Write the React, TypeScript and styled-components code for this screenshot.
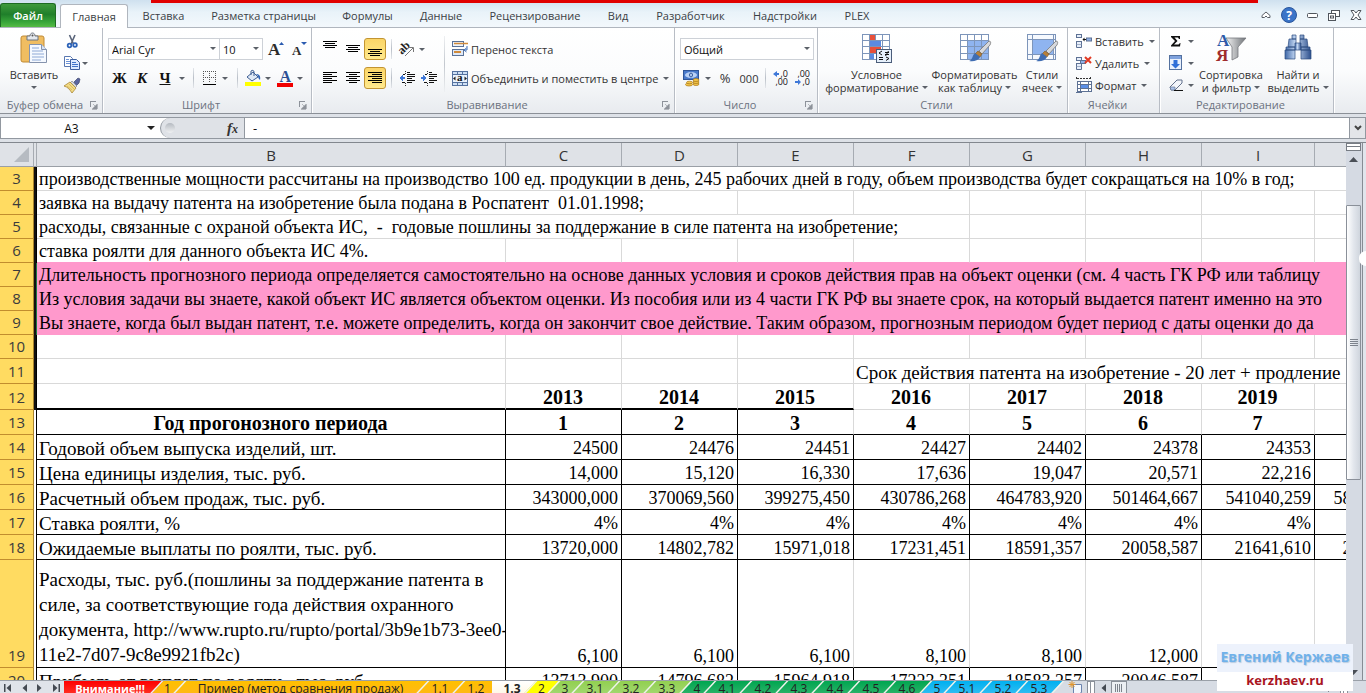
import React from "react";
import styled, { createGlobalStyle, css } from "styled-components";

const ui = '"Open Sans", "Noto Sans", "Liberation Sans", sans-serif';
const serif = '"Liberation Serif", "Times New Roman", serif';

const GlobalStyle = createGlobalStyle`
  * { box-sizing: border-box; }
  html, body, #root { height: 100%; }
  body { margin: 0; overflow: hidden; font-family: ${ui}; font-size: 11px; color: #333; background: #fff; }
  button, input, select { font: inherit; color: inherit; margin: 0; }
  button { border: 0; padding: 0; background: none; white-space: nowrap; }
  svg { display: block; flex: none; overflow: visible; }
`;

/* ---------- shell ---------- */
const Shell = styled.div`
  position: relative;
  display: flex;
  flex-direction: column;
  height: 100vh;
  overflow: hidden;
`;
const RedStrip = styled.div`
  position: absolute;
  top: 0;
  left: 151px;
  right: 108px;
  height: 3px;
  background: #e00000;
`;
const TabBar = styled.nav`
  display: flex;
  align-items: flex-end;
  height: 28px;
  flex: none;
  border-bottom: 1px solid #b0b6be;
  background: linear-gradient(#cfe1ef, #e9f3f9 45%, #f3f8fc);
`;
const FileTab = styled.button`
  width: 56px;
  height: 24px;
  border: 1px solid #1d6b22;
  border-bottom: 0;
  border-radius: 3px 3px 0 0;
  background: linear-gradient(#3f9a3c, #1f7f2a 45%, #3aa83a 80%, #56bb45);
  color: #fff;
  font-weight: 600;
`;
const RibbonTab = styled.button<{ $w: number; $active?: boolean }>`
  width: ${(p) => p.$w}px;
  height: 24px;
  color: #3b3f45;
  ${(p) =>
    p.$active &&
    css`
      margin: 0 1px -1px 4px;
      border: 1px solid #b0b6be;
      border-bottom: 0;
      border-radius: 3px 3px 0 0;
      background: #fff;
    `}
`;
const WindowTools = styled.div`
  display: flex;
  align-items: center;
  gap: 10px;
  height: 24px;
  margin-left: auto;
  padding-right: 4px;
`;

/* ---------- ribbon ---------- */
const Ribbon = styled.div`
  display: flex;
  flex: none;
  height: 86px;
  border-bottom: 1px solid #8b9097;
  background: linear-gradient(#fff, #fbfcfd 50%, #e8ebef);
`;
const GroupBox = styled.section<{ $w: number }>`
  display: flex;
  flex-direction: column;
  width: ${(p) => p.$w}px;
  border-right: 1px solid #b8bdc5;
  box-shadow: 1px 0 0 #fff;
`;
const GroupBody = styled.div<{ $pad?: number }>`
  display: flex;
  height: 69px;
  padding-left: ${(p) => p.$pad ?? 0}px;
`;
const GroupLabel = styled.div<{ $launcher?: boolean }>`
  display: grid;
  grid-template-columns: 1fr 12px;
  align-items: center;
  height: 15px;
  padding-right: ${(p) => (p.$launcher ? 0 : 0)}px;
  text-align: center;
  white-space: nowrap;
  color: #6b7280;
`;
const BigButton = styled.button<{ $w: number }>`
  display: flex;
  flex-direction: column;
  align-items: center;
  width: ${(p) => p.$w}px;
  padding-top: 5px;
  line-height: 13px;
`;
const BigText = styled.span`
  display: flex;
  align-items: center;
  gap: 3px;
  height: 13px;
`;
const BigIcon = styled.span`
  display: block;
  height: 35px;
`;
const SmallStack = styled.div`
  display: flex;
  flex-direction: column;
  padding-top: 2px;
`;
const TwoRows = styled.div`
  display: flex;
  flex-direction: column;
  gap: 7px;
  padding-top: 10px;
`;
const Row = styled.div`
  display: flex;
  align-items: center;
  height: 22px;
`;
const Tool = styled.button<{ $w: number; $on?: boolean; $size?: number }>`
  display: flex;
  align-items: center;
  justify-content: center;
  width: ${(p) => p.$w}px;
  height: 22px;
  font-size: ${(p) => p.$size ?? 11}px;
  ${(p) =>
    p.$on &&
    css`
      border: 1px solid #c29432;
      border-radius: 3px;
      background: linear-gradient(#fbd568, #fde17c 60%, #ffe98f);
    `}
`;
const LabelTool = styled.button`
  display: flex;
  align-items: center;
  gap: 3px;
  height: 22px;
  svg:last-child { margin-left: 2px; }
  svg:first-child { margin-left: 0; }
`;
const Glyph = styled.span<{ $kind: "b" | "i" | "u" }>`
  font-family: ${serif};
  font-size: 15px;
  font-weight: bold;
  line-height: 16px;
  color: #111;
  ${(p) => p.$kind === "i" && "font-style: italic;"}
  ${(p) => p.$kind === "u" && "text-decoration: underline;"}
`;
const Sep = styled.span<{ $w: number }>`
  width: ${(p) => p.$w}px;
  height: 20px;
  background: linear-gradient(#e3e6ea, #b9bfc7, #e3e6ea) center / 1px 100% no-repeat;
`;
const TallSep = styled.span`
  width: 1px;
  height: 56px;
  margin: 8px 7px 0 4px;
  background: linear-gradient(#eef0f2, #c3c8cf, #eef0f2);
`;
const Combo = styled.label<{ $w: number }>`
  position: relative;
  display: flex;
  width: ${(p) => p.$w}px;
  height: 22px;
  margin-right: -1px;
  select {
    appearance: none;
    width: 100%;
    height: 22px;
    padding: 0 3px;
    border: 1px solid #cdd1d7;
    border-radius: 0;
    background: #fff;
    color: #111;
  }
  svg {
    position: absolute;
    right: 4px;
    top: 9px;
  }
`;

/* ---------- formula bar ---------- */
const FormulaBar = styled.div`
  display: flex;
  flex: none;
  height: 29px;
  padding: 3px 0 0;
  border-bottom: 1px solid #82878e;
  background: #dde1e7;
`;
const FormulaInner = styled.div`
  display: flex;
  flex: 1;
  height: 22px;
  border: 1px solid #9298a0;
  background: #fff;
`;
const NameBox = styled.input`
  width: 141px;
  padding: 0;
  border: 0;
  background: #fff;
  text-align: center;
  font-size: 12px;
  color: #111;
`;
const FxZone = styled.div`
  display: flex;
  align-items: center;
  justify-content: space-between;
  width: 85px;
  padding: 0 6px 0 4px;
  border-left: 1px solid #9298a0;
  border-right: 1px solid #9298a0;
  border-radius: 11px 0 0 11px;
  background: #dfe2e7;
`;
const Knob = styled.span`
  width: 10px;
  height: 10px;
  border-radius: 5px;
  background: linear-gradient(#b5bac1, #f0f1f3);
`;
const Fx = styled.button`
  font: italic bold 15px/16px ${serif};
  color: #333;
  small { font-size: 12px; }
`;
const NameArrow = styled.button`
  display: grid;
  place-items: center;
  width: 18px;
`;
const FormulaInput = styled.input`
  flex: 1;
  min-width: 0;
  padding: 0 8px;
  border: 0;
  font-size: 13px;
  color: #111;
`;
const ExpandButton = styled.button`
  display: grid;
  place-items: center;
  width: 16px;
  border-left: 1px solid #9298a0;
  background: #e3e5e9;
`;

/* ---------- grid ---------- */
const SheetArea = styled.div`
  display: flex;
  flex: 1;
  min-height: 0;
`;
const Viewport = styled.main`
  flex: 1;
  min-width: 0;
  overflow: hidden;
`;
const Grid = styled.table`
  width: 1423px;
  table-layout: fixed;
  border-collapse: separate;
  border-spacing: 0;
  font-family: ${serif};
  font-size: 18px;
  color: #000;
  td, th { padding: 0; white-space: nowrap; }
`;
const ColHead = styled.th`
  height: 24px;
  border-right: 1px solid #a6abb2;
  border-bottom: 1px solid #9a9fa6;
  background: #dfe2e7;
  font: 15px/22px ${ui};
  color: #333;
`;
const Corner = styled(ColHead)`
  svg { margin-left: 14px; }
`;
const RowHead = styled.th<{ $h: number }>`
  height: ${(p) => p.$h}px;
  border-right: 1px solid #a9832c;
  border-bottom: 1px solid #c18d2e;
  background: #ffdb61;
  font: 15px/23px ${ui};
  color: #3c3c3c;
  vertical-align: bottom;
`;
const Edge = styled.td<{ $kind: "bar" | "green" | "line" }>`
  border-right: 1px solid ${(p) => (p.$kind === "green" ? "#1f7a45" : "#000")};
  background: ${(p) => (p.$kind === "line" ? "#fff" : "#111")};
`;
const Cell = styled.td<{
  $align?: "left" | "center" | "right";
  $bold?: boolean;
  $pink?: boolean;
  $right?: string;
  $bottom?: string;
  $lh?: number;
  $size?: number;
}>`
  overflow: hidden;
  vertical-align: bottom;
  font-size: ${(p) => (p.$bold ? 20 : p.$size ?? 18)}px;
  line-height: ${(p) => p.$lh ?? 21}px;
  text-align: ${(p) => p.$align ?? "left"};
  font-weight: ${(p) => (p.$bold ? "bold" : "normal")};
  background: ${(p) => (p.$pink ? "#ff99cc" : "#fff")};
  border-right: 1px solid ${(p) => p.$right ?? "#d9d9d9"};
  border-bottom: ${(p) => p.$bottom ?? "1px solid #d9d9d9"};
  && { padding: 0 3px 0 2px; white-space: pre; }
`;
const VScroll = styled.div`
  display: flex;
  flex-direction: column;
  width: 17px;
  border-right: 1px solid #878c94;
  background: #d5dae3;
`;
const SplitBox = styled.span`
  height: 8px;
  margin: 0 1px 0 0;
  border: 1px solid #777c84;
  background: linear-gradient(#fff 2px, #777c84 2px, #777c84 3px, #fff 3px);
`;
const ScrollArrow = styled.button`
  display: grid;
  place-items: center;
  width: 15px;
  height: 16px;
`;
const VThumb = styled.div`
  display: grid;
  place-items: center;
  width: 15px;
  height: 275px;
  margin-top: 38px;
  margin-bottom: auto;
  border: 1px solid #8a9099;
  border-radius: 1px;
  background: linear-gradient(90deg, #fff, #e3e7ed 50%, #cfd5dd);
`;
const RightStrip = styled.div`
  width: 3px;
  background: #e1e5ec;
`;
const Handle = styled.span`
  position: absolute;
  right: 0;
  top: 251px;
  width: 7px;
  height: 15px;
  border-radius: 8px 0 0 8px;
  background: #fff;
`;

/* ---------- sheet tabs ---------- */
const SheetBar = styled.div`
  display: flex;
  flex: none;
  height: 13px;
  overflow: hidden;
  border-top: 1px solid #9aa0a8;
  background: #d7dce4;
`;
const SheetNav = styled.div`
  display: flex;
  align-items: center;
  justify-content: space-around;
  width: 64px;
  height: 13px;
  background: #dfe3e9;
`;
const SheetTab = styled.button<{ $w: number; $c: string; $flat?: boolean; $dark?: boolean }>`
  position: relative;
  z-index: 0;
  width: ${(p) => p.$w}px;
  height: 16px;
  color: ${(p) => (p.$dark ? "#fff" : "#222")};
  font-size: ${(p) => (p.$dark ? 11 : 12)}px;
  line-height: 16px;
  font-weight: ${(p) => (p.$dark || p.$flat ? "bold" : "normal")};
  &::before {
    content: "";
    position: absolute;
    z-index: -1;
    inset: 0 -10px 0 -2px;
    transform: ${(p) => (p.$flat ? "none" : "skewX(-43deg)")};
    border-left: 2px solid #eef3ec;
    background: ${(p) => p.$c};
    ${(p) => p.$flat && "border: 0;"}
  }
  &:first-of-type::before { left: -12px; }
  &:last-of-type::before { right: 0; border-right: 2px solid #eef3ec; }
`;
const SheetTabs = styled.div`
  display: flex;
  overflow: hidden;
  padding-right: 8px;
`;
const HScroll = styled.div`
  display: flex;
  flex: 1;
  align-items: center;
  height: 13px;
  padding-right: 18px;
`;
const SplitHandle = styled.span`
  width: 8px;
  height: 13px;
  border: 1px solid #8a9099;
  background: linear-gradient(90deg, #fff 2px, #8a9099 2px, #8a9099 3px, #fff 3px);
`;
const HThumb = styled.span`
  display: grid;
  place-items: center;
  width: 16px;
  height: 13px;
  margin-right: auto;
  border: 1px solid #8a9099;
  background: #eceff3;
`;
const Watermark = styled.aside`
  position: absolute;
  right: 13px;
  bottom: 2px;
  width: 136px;
  text-align: center;
  font-weight: bold;
  white-space: nowrap;
`;
const MarkName = styled.div`
  height: 28px;
  background: #edf2fc;
  color: #6fb1ea;
  font-size: 14px;
  line-height: 26px;
  text-shadow: 1px 1px 1px #b9cbe0;
`;
const MarkSite = styled.a`
  display: block;
  height: 19px;
  background: #fff;
  color: #a9151f;
  font-size: 13px;
  line-height: 16px;
  text-decoration: none;
`;

/* ---------- icons ---------- */
const Arrow = ({ c = "#5b6068", w = 6 }: { c?: string; w?: number }) => (
  <svg width={w} height={w / 2} viewBox="0 0 6 3"><path d="M0 0h6L3 3z" fill={c} /></svg>
);
const Launcher = () => (
  <svg width="8" height="8" viewBox="0 0 8 8" shapeRendering="crispEdges">
    <path d="M0 .5h6M.5 0v6" stroke="#8d929a" />
    <path d="M7 3v5H2zM3 3l3 3" fill="#8d929a" stroke="#8d929a" strokeWidth=".6" />
  </svg>
);
const PasteIcon = () => (
  <svg width="28" height="31" viewBox="0 0 28 31">
    <rect x="1" y="3" width="23" height="26" rx="2" fill="#f0bd61" stroke="#c08a35" />
    <path d="M7 7V3h3c0-4 5-4 5 0h3v4z" fill="#e4e8ee" stroke="#6d7480" />
    <circle cx="12.500" cy="2.500" r="1" fill="#555" />
    <path d="M9.500 11.500h12l5 5v13h-17z" fill="#f5f9ff" stroke="#8593ad" />
    <path d="M21.500 11.500v5h5" fill="#d6e2f5" stroke="#8593ad" />
    <path d="M12 15h7M12 18h11M12 21h12M12 24h12M12 27h9" stroke="#8ea9d6" />
  </svg>
);
const CutIcon = () => (
  <svg width="14" height="15" viewBox="0 0 14 15" fill="none">
    <path d="M4.500 1l4 9M10 1L6 10" stroke="#59647a" strokeWidth="1.600" />
    <circle cx="4.500" cy="11.500" r="1.800" stroke="#2d63b8" strokeWidth="1.800" />
    <circle cx="10" cy="11" r="1.800" stroke="#2d63b8" strokeWidth="1.800" />
  </svg>
);
const CopyIcon = () => (
  <svg width="16" height="14" viewBox="0 0 16 14">
    <path d="M.5.500h6l2 2v8h-8z" fill="#fff" stroke="#5877b0" />
    <path d="M2 3.500h3M2 5.500h4M2 7.500h4" stroke="#6d93d6" />
    <path d="M6.500 3.500h6l3 3v7h-9z" fill="#dceaff" stroke="#3d5f9f" />
    <path d="M8 6.500h4M8 8.500h6M8 10.500h6" stroke="#3f73c9" />
  </svg>
);
const BrushIcon = () => (
  <svg width="17" height="16" viewBox="0 0 17 16">
    <path d="M10 5l4-4 2 1-1 4-3 3z" fill="#5b66a0" stroke="#434a70" strokeWidth=".7" />
    <path d="M8 4l5 5-2 2-5-5z" fill="#d3d8e2" stroke="#777" strokeWidth=".6" />
    <path d="M6 5l6 6-4 5C6 13 4 10 0 9z" fill="#f3dc85" stroke="#a98532" strokeWidth=".8" />
    <path d="M3 9l5 4M5 7l5 5" stroke="#cfae55" strokeWidth=".7" />
  </svg>
);
const SizeA = ({ up }: { up?: boolean }) => (
  <svg width="17" height="18" viewBox="0 0 17 18">
    <text x="0" y="15" fontFamily="Liberation Serif, serif" fontWeight="bold" fontSize={up ? 17 : 13} fill="#2c2c2c">A</text>
    {up ? <path d="M11 5h5l-2.500-3z" fill="#2a5bb0" /> : <path d="M9 2h6l-3 3z" fill="#2a5bb0" />}
  </svg>
);
const BorderIcon = () => (
  <svg width="14" height="14" viewBox="0 0 14 14" shapeRendering="crispEdges" fill="none">
    <path d="M.5 0v12M6.500 0v12M12.500 0v12M0 .5h13M0 6.500h13" stroke="#555" strokeDasharray="1 1" />
    <path d="M0 13.500h13" stroke="#000" />
  </svg>
);
const FillIcon = () => (
  <svg width="17" height="16" viewBox="0 0 17 16">
    <path d="M2 7l6-5 5 5-6 4z" fill="#dfe9f6" stroke="#3f5f93" />
    <path d="M6 5V1c1-1 3-1 3 1v4" fill="none" stroke="#3f5f93" />
    <path d="M11 4c3 0 5 2 4 6-1-1-2-2-2-4z" fill="#2f63b5" />
    <rect y="12" width="16" height="4" fill="#ff0" />
  </svg>
);
const FontColorIcon = () => (
  <svg width="16" height="17" viewBox="0 0 16 17">
    <text x="2.500" y="11.500" fontFamily="Liberation Serif, serif" fontWeight="bold" fontSize="16" fill="#2c4f94">A</text>
    <rect y="13" width="16" height="4" fill="#f00000" />
  </svg>
);
const Lines = ({ rows, off = 0 }: { rows: [number, number][]; off?: number }) => (
  <svg width="14" height="16" viewBox="0 0 14 16" shapeRendering="crispEdges">
    {rows.map(([x, w], i) => <rect key={i} x={x} y={off + i * 2} width={w} height="1" fill="#000" />)}
  </svg>
);
const vRows: [number, number][] = [[0, 14], [2, 10], [0, 14], [2, 10]];
const lRows: [number, number][] = [[0, 14], [0, 9], [0, 14], [0, 9], [0, 14], [0, 9]];
const cRows: [number, number][] = [[0, 14], [3, 8], [0, 14], [3, 8], [0, 14], [3, 8]];
const rRows: [number, number][] = [[0, 14], [4, 10], [0, 14], [4, 10], [0, 14], [4, 10]];
const OrientIcon = () => (
  <svg width="16" height="15" viewBox="0 0 16 15">
    <text x="0" y="10" transform="rotate(-45 5 8)" fontFamily="Liberation Serif, serif" fontWeight="bold" fontSize="12" fill="#222">ab</text>
    <path d="M6 14l8-8M10 5.500h4.500V10" fill="none" stroke="#777" />
  </svg>
);
const IndentIcon = ({ right }: { right?: boolean }) => (
  <svg width="16" height="15" viewBox="0 0 16 15" shapeRendering="crispEdges">
    <path d="M6.500 0v1M6.500 2v1M6.500 12v1M6.500 14v1" stroke="#333" />
    <path d="M8 1.500h3M4 3.500h2M8 3.500h8M8 5.500h8M8 7.500h5M8 9.500h8M3 11.500h3M8 11.500h5" stroke="#111" />
    {right ? <path d="M0 6h2V4l4 3-4 3V8H0z" fill="#3f78d8" /> : <path d="M6 6H4V4L0 7l4 3V8h2z" fill="#3f78d8" />}
  </svg>
);
const WrapIcon = () => (
  <svg width="16" height="16" viewBox="0 0 16 16" fill="none">
    <rect x=".5" y=".5" width="11" height="5" fill="#eef3fa" stroke="#5a7298" />
    <path d="M2 2.500h14" stroke="#d08a3a" strokeWidth="1.500" />
    <rect x=".5" y="8.500" width="11" height="6" fill="#dfe9f7" stroke="#5a7298" />
    <path d="M2 11h7" stroke="#d08a3a" strokeWidth="2" />
    <path d="M15 5v4h-2.500M14.500 7L12 9l2.500 2" stroke="#3f6fb8" />
  </svg>
);
const MergeIcon = () => (
  <svg width="16" height="15" viewBox="0 0 16 15">
    <rect x=".5" y=".5" width="15" height="14" fill="#cfe0f5" stroke="#55729f" />
    <path d="M5.500 0v3M10.500 0v3M5.500 12v3M10.500 12v3M0 3.500h16M0 11.500h16" stroke="#55729f" />
    <rect x="1" y="4" width="14" height="7" fill="#eaf2fc" />
    <text x="5" y="10" fontFamily="Liberation Serif, serif" fontWeight="bold" fontSize="11" fill="#111">a</text>
    <path d="M1 7.500l2.500-2v4zM15 7.500l-2.500-2v4z" fill="#222" />
  </svg>
);
const MoneyIcon = () => (
  <svg width="17" height="17" viewBox="0 0 17 17">
    <rect x=".5" y=".5" width="15" height="9" fill="#4a7acb" stroke="#2f5597" />
    <ellipse cx="8" cy="5" rx="6" ry="3" fill="#b9d1f5" />
    <ellipse cx="8" cy="5" rx="1.500" ry="2" fill="none" stroke="#2f5597" />
    <g fill="#f3c54a" stroke="#a87718" strokeWidth=".7">
      <ellipse cx="13" cy="14" rx="3" ry="1.500" /><ellipse cx="13" cy="12" rx="3" ry="1.500" /><ellipse cx="13" cy="10" rx="3" ry="1.500" />
      <ellipse cx="6" cy="14.500" rx="3.500" ry="1.500" /><ellipse cx="6.500" cy="12.500" rx="3" ry="1.300" />
    </g>
  </svg>
);
const DecimalIcon = ({ less }: { less?: boolean }) => (
  <svg width="16" height="16" viewBox="0 0 16 16">
    <g fontFamily="Open Sans, sans-serif" fontSize="9" textAnchor="end" fill="#111">
      <text x="15" y="7">{less ? ",00" : ",0"}</text>
      <text x="15" y="15">{less ? ",0" : ",00"}</text>
    </g>
    {less ? <path d="M0 11h3V9l3 3-3 3v-2H0z" fill="#3f78d8" /> : <path d="M6 3H4V1L0 4l4 3V5h2z" fill="#3f78d8" />}
  </svg>
);
const BrushOver = () => (
  <g>
    <path d="M30 8c2 0 2 2 1 4l-8 9-3-3z" fill="#d6d8dc" stroke="#777" strokeWidth=".8" />
    <path d="M19 18l4 3-2 3-5-3z" fill="#b8803a" stroke="#7c5722" strokeWidth=".6" />
    <path d="M16 20l5 4c-2 4-7 5-11 4 4-1 3-6 6-8z" fill="#3f6db3" />
  </g>
);
const CondIcon = () => (
  <svg width="32" height="31" viewBox="0 0 32 31">
    <rect x="1.500" y="1.500" width="27" height="25" fill="#fff" stroke="#7d95ba" />
    <rect x="8" y="2" width="6" height="5" fill="#e8503a" />
    <rect x="8" y="7" width="12" height="6" fill="#5b8ae0" />
    <rect x="8" y="14" width="12" height="6" fill="#e8503a" />
    <rect x="8" y="20" width="5" height="6" fill="#5b8ae0" />
    <path d="M8.500 1v26M14.500 1v6M21.500 1v26M1 7.500h28M1 13.500h28M1 20.500h28" stroke="#7d95ba" fill="none" />
    <rect x="15.500" y="16.500" width="15" height="13" fill="#e6f0fb" stroke="#4b5d7a" />
    <path d="M21 18l-3 2 3 2M18 24.500h4M18 26.500h4M24 19.500h4M24 21.500h4M27.500 18l-3 5M25 24l3 1.500-3 2" stroke="#111" fill="none" />
  </svg>
);
const TableIcon = () => (
  <svg width="32" height="31" viewBox="0 0 32 31">
    <rect x="1.500" y="1.500" width="28" height="25" fill="#fff" stroke="#7d95ba" />
    <rect x="9" y="8" width="20" height="18" fill="#8fb4f0" />
    <path d="M8.500 1v26M15.500 1v26M22.500 1v26M1 7.500h29M1 13.500h29M1 20.500h29" stroke="#7d95ba" fill="none" />
    <BrushOver />
  </svg>
);
const CellStyleIcon = () => (
  <svg width="32" height="31" viewBox="0 0 32 31">
    <rect x="1.500" y="1.500" width="28" height="25" fill="#f6f9fe" stroke="#7d95ba" />
    <rect x="7" y="7" width="20" height="14" fill="#8fb4f0" />
    <path d="M6.500 1v26M27.500 1v26M1 6.500h29M1 21.500h29" stroke="#7d95ba" fill="none" />
    <BrushOver />
  </svg>
);
const InsertCellsIcon = () => (
  <svg width="16" height="14" viewBox="0 0 16 14" fill="#e7eefa" stroke="#5d7194">
    <rect x=".5" y=".5" width="5" height="3" /><rect x=".5" y="7.500" width="5" height="3" /><path d="M.5 10.500v3h5v-3" />
    <path d="M7 5.500h3" stroke="#111" /><path d="M8.500 3.500l-2 2 2 2z" fill="#111" stroke="none" />
    <rect x="10.500" y="4" width="5" height="3" fill="#8fb0e6" />
  </svg>
);
const DeleteCellsIcon = () => (
  <svg width="16" height="14" viewBox="0 0 16 14" fill="#e7eefa" stroke="#5d7194">
    <rect x=".5" y="1.500" width="5" height="3" /><rect x="4.500" y="4.500" width="5" height="3" fill="#8fb0e6" />
    <rect x=".5" y="7.500" width="5" height="3" /><path d="M.5 10.500v3h5v-3" />
    <path d="M9 1l6 6M15 1L9 7" stroke="#e23a24" strokeWidth="2" />
  </svg>
);
const FormatCellsIcon = () => (
  <svg width="16" height="16" viewBox="0 0 16 16" fill="none">
    <path d="M.5 0v3M14.500 0v3M1 1.500h13" stroke="#333" strokeDasharray="2 1" />
    <rect x="1.500" y="4.500" width="14" height="10" fill="#fff" stroke="#5d7194" />
    <rect x="5" y="7" width="7" height="5" fill="#5b8fe6" />
    <path d="M4.500 4v11M12.500 4v11M1 7.500h15M1 11.500h15M0 15.500h6" stroke="#5d7194" />
  </svg>
);
const SigmaIcon = () => (
  <svg width="12" height="12" viewBox="0 0 12 12"><path d="M1 1h9v3h-1L8 2.500H4.500L7.500 6l-3.500 3.500h4.500L10 8h.5l-.5 3.500H1v-1L5 6 1 2z" fill="#111" /></svg>
);
const FillDownIcon = () => (
  <svg width="14" height="16" viewBox="0 0 14 16">
    <rect x=".5" y=".5" width="12" height="14" fill="#e8f0fc" stroke="#54719f" />
    <rect x="1" y="1" width="11" height="3" fill="#7fa2dd" />
    <path d="M4.500 5h4v4H11l-4.500 4.500L2 9h2.500z" fill="#2f6fd8" />
  </svg>
);
const EraserIcon = () => (
  <svg width="15" height="13" viewBox="0 0 15 13">
    <path d="M1 8l7-7h5v3l-7 7H2z" fill="#f3f6fb" stroke="#63718c" />
    <path d="M1 8h5v3H2z" fill="#a9c2ea" stroke="#63718c" strokeWidth=".6" />
    <path d="M5 11.500h9" stroke="#111" />
  </svg>
);
const SortIcon = () => (
  <svg width="32" height="31" viewBox="0 0 32 31">
    <defs>
      <linearGradient id="funnel"><stop offset="0" stopColor="#f3f3f3" /><stop offset="1" stopColor="#6f7378" /></linearGradient>
    </defs>
    <path d="M11 5h20l-8 9v10l-6 3V14z" fill="url(#funnel)" stroke="#77797d" strokeWidth=".8" />
    <g fontFamily="Liberation Serif, serif" fontWeight="bold" fontSize="17">
      <text x="2" y="13" fill="#2e5aa8">A</text><text x="1" y="28" fill="#a02c2c">Я</text>
    </g>
  </svg>
);
const FindIcon = () => (
  <svg width="30" height="31" viewBox="0 0 30 31">
    <defs>
      <linearGradient id="bino"><stop offset="0" stopColor="#3f68a8" /><stop offset=".4" stopColor="#c6d9f3" /><stop offset="1" stopColor="#2c4f8c" /></linearGradient>
    </defs>
    <g fill="url(#bino)" stroke="#2d4a80" strokeWidth=".7">
      <path d="M9 2h4v4H9zM17 2h4v4h-4zM6 6h7v8H5zM17 6h7l1 8h-8zM3 14h9v3H3zM18 14h9v3h-9zM2 17h10v9H2zM18 17h10v9H18z" />
      <path d="M12 10h6v7h-6z" />
    </g>
  </svg>
);
const HelpIcon = () => (
  <svg width="16" height="16" viewBox="0 0 16 16">
    <circle cx="8" cy="8" r="7.500" fill="#3b74c8" stroke="#2b569c" />
    <text x="8" y="12.500" textAnchor="middle" fontFamily="Open Sans, sans-serif" fontWeight="bold" fontSize="12" fill="#fff">?</text>
  </svg>
);
const CollapseIcon = () => (
  <svg width="10" height="8" viewBox="0 0 10 8"><path d="M1 4.500L5 1l4 3.500V6.500H6.500L5 5 3.500 6.500H1z" fill="#fff" stroke="#5a5f67" /></svg>
);
const MinIcon = () => (
  <svg width="11" height="5" viewBox="0 0 11 5"><rect x=".5" y=".5" width="10" height="4" rx="1" fill="#fff" stroke="#50555c" /></svg>
);
const RestoreIcon = () => (
  <svg width="12" height="11" viewBox="0 0 12 11" fill="#fff" stroke="#50555c">
    <rect x="3.500" y=".5" width="8" height="6" /><rect x=".5" y="3.500" width="7" height="7" /><rect x="2.500" y="6" width="3" height="2" />
  </svg>
);
const CloseIcon = () => (
  <svg width="12" height="10" viewBox="0 0 12 10"><path d="M1 .5h3L6 3 8 .5h3L8 5l3 4.500H8L6 7 4 9.500H1L4 5z" fill="#fff" stroke="#50555c" /></svg>
);
const NavIcon = ({ dir, end }: { dir: "l" | "r"; end?: boolean }) => (
  <svg width="8" height="8" viewBox="0 0 8 8" fill="#444a52">
    {dir === "l" ? <path d="M7 0v8L2.500 4z" /> : <path d="M1 0v8l4.500-4z" />}
    {end && <rect x={dir === "l" ? 0 : 6.500} width="1.500" height="8" />}
  </svg>
);
const NewSheetIcon = () => (
  <svg width="16" height="13" viewBox="0 0 16 13">
    <path d="M5.500 3.500h8v8l-2 1h-6z" fill="#f4f8fe" stroke="#6a82ad" />
    <path d="M4 0v7M.5 3.500h7M1.500 1l5 5M6.500 1l-5 5" stroke="#e0952d" />
  </svg>
);

/* ---------- data ---------- */
const ribbonTabs: [string, number][] = [
  ["Вставка", 69], ["Разметка страницы", 131], ["Формулы", 77], ["Данные", 70],
  ["Рецензирование", 118], ["Вид", 48], ["Разработчик", 97], ["Надстройки", 92], ["PLEX", 52],
];
const columns: [string, number][] = [
  ["B", 469], ["C", 116], ["D", 116], ["E", 116], ["F", 116], ["G", 116], ["H", 116], ["I", 113], ["", 108],
];
const textRows: { n: number; text: string; span: number; pink?: boolean }[] = [
  { n: 3, span: 9, text: "производственные мощности рассчитаны на производство 100 ед. продукции в день, 245 рабочих дней в году, объем производства будет сокращаться на 10% в год;" },
  { n: 4, span: 3, text: "заявка на выдачу патента на изобретение была подана в Роспатент  01.01.1998;" },
  { n: 5, span: 5, text: "расходы, связанные с охраной объекта ИС,  -  годовые пошлины за поддержание в силе патента на изобретение;" },
  { n: 6, span: 1, text: "ставка роялти для данного объекта ИС 4%." },
  { n: 7, span: 9, pink: true, text: "Длительность прогнозного периода определяется самостоятельно на основе данных условия и сроков действия прав на объект оценки (см. 4 часть ГК РФ или таблицу" },
  { n: 8, span: 9, pink: true, text: "Из условия задачи вы знаете, какой объект ИС является объектом оценки. Из пособия или из 4 части ГК РФ вы знаете срок, на который выдается патент именно на это" },
  { n: 9, span: 9, pink: true, text: "Вы знаете, когда был выдан патент, т.е. можете определить, когда он закончит свое действие. Таким образом, прогнозным периодом будет период с даты оценки до да" },
  { n: 10, span: 1, text: "" },
];
const years = ["2013", "2014", "2015", "2016", "2017", "2018", "2019", ""];
const dataRows: { n: number; h: number; label: string; v: string[]; soft?: boolean }[] = [
  { n: 14, h: 25, label: "Годовой объем выпуска изделий, шт.", v: ["24500", "24476", "24451", "24427", "24402", "24378", "24353", ""] },
  { n: 15, h: 25, label: "Цена единицы изделия, тыс. руб.", v: ["14,000", "15,120", "16,330", "17,636", "19,047", "20,571", "22,216", ""] },
  { n: 16, h: 25, label: "Расчетный объем продаж, тыс. руб.", v: ["343000,000", "370069,560", "399275,450", "430786,268", "464783,920", "501464,667", "541040,259", "583739,156"] },
  { n: 17, h: 25, label: "Ставка роялти, %", v: ["4%", "4%", "4%", "4%", "4%", "4%", "4%", ""] },
  { n: 18, h: 25, label: "Ожидаемые выплаты по роялти, тыс. руб.", v: ["13720,000", "14802,782", "15971,018", "17231,451", "18591,357", "20058,587", "21641,610", "23349,566"] },
  { n: 19, h: 108, soft: true, label: "Расходы, тыс. руб.(пошлины за поддержание патента в\nсиле, за соответствующие года действия охранного\nдокумента, http://www.rupto.ru/rupto/portal/3b9e1b73-3ee0-\n11e2-7d07-9c8e9921fb2c)", v: ["6,100", "6,100", "6,100", "8,100", "8,100", "12,000", "", ""] },
  { n: 20, h: 25, label: "Прибыль от выплат по роялти,  тыс. руб.", v: ["13713,900", "14796,682", "15964,918", "17223,351", "18583,257", "20046,587", "", ""] },
];
const orange = "linear-gradient(#ffc000, #ffb61a)";
const lime = "linear-gradient(#92d050, #a5d977)";
const green = "linear-gradient(#00a650, #35b56f)";
const blue = "linear-gradient(#00b0f0, #3cc0f2)";
const sheets: { t: string; w: number; c: string; flat?: boolean; dark?: boolean }[] = [
  { t: "Внимание!!!", w: 92, c: "linear-gradient(#f00, #ff3b2b)", dark: true },
  { t: "1", w: 23, c: orange }, { t: "Пример (метод сравнения продаж)", w: 243, c: orange },
  { t: "1.1", w: 36, c: orange }, { t: "1.2", w: 36, c: orange },
  { t: "1.3", w: 36, c: "linear-gradient(#fff, #fff6e0)", flat: true },
  { t: "2", w: 23, c: "#ff0" }, { t: "3", w: 24, c: lime },
  { t: "3.1", w: 36, c: lime }, { t: "3.2", w: 36, c: lime }, { t: "3.3", w: 36, c: lime },
  { t: "4", w: 24, c: green }, { t: "4.1", w: 36, c: green }, { t: "4.2", w: 36, c: green }, { t: "4.3", w: 36, c: green },
  { t: "4.4", w: 36, c: green }, { t: "4.5", w: 36, c: green }, { t: "4.6", w: 36, c: green },
  { t: "5", w: 24, c: blue }, { t: "5.1", w: 36, c: blue }, { t: "5.2", w: 36, c: blue }, { t: "5.3", w: 36, c: blue },
];

/* ---------- parts ---------- */
function Group({ title, w, pad, launcher, children }: { title: string; w: number; pad?: number; launcher?: boolean; children: React.ReactNode }) {
  return (
    <GroupBox $w={w} aria-label={title}>
      <GroupBody $pad={pad}>{children}</GroupBody>
      <GroupLabel><span>{title}</span>{launcher && <button aria-label={title + ": параметры"}><Launcher /></button>}</GroupLabel>
    </GroupBox>
  );
}
function Big({ w, icon, a, b }: { w: number; icon: React.ReactNode; a: string; b?: string }) {
  return (
    <BigButton $w={w}>
      <BigIcon>{icon}</BigIcon>
      <BigText>{a}</BigText>
      <BigText>{b}<Arrow /></BigText>
    </BigButton>
  );
}
function Drop({ w = 10 }: { w?: number }) {
  return <Tool $w={w} aria-label="Ещё"><Arrow /></Tool>;
}
function Choice({ w, label, value }: { w: number; label: string; value: string }) {
  return <Combo $w={w}><select aria-label={label}><option>{value}</option></select><Arrow /></Combo>;
}

function RibbonPanel() {
  return (
    <Ribbon>
      <Group title="Буфер обмена" w={103} pad={4} launcher>
        <Big w={60} icon={<PasteIcon />} a="Вставить" />
        <SmallStack>
          <Row><Tool $w={16} aria-label="Вырезать"><CutIcon /></Tool></Row>
          <Row><Tool $w={16} aria-label="Копировать"><CopyIcon /></Tool><Drop /></Row>
          <Row><Tool $w={16} aria-label="Формат по образцу"><BrushIcon /></Tool></Row>
        </SmallStack>
      </Group>
      <Group title="Шрифт" w={209} pad={5} launcher>
        <TwoRows>
          <Row>
            <Choice w={112} label="Шрифт" value="Arial Cyr" />
            <Choice w={44} label="Размер" value="10" />
            <Tool $w={28} aria-label="Увеличить размер"><SizeA up /></Tool>
            <Tool $w={20} aria-label="Уменьшить размер"><SizeA /></Tool>
          </Row>
          <Row>
            <Tool $w={23}><Glyph $kind="b">Ж</Glyph></Tool>
            <Tool $w={22}><Glyph $kind="i">К</Glyph></Tool>
            <Tool $w={24}><Glyph $kind="u">Ч</Glyph></Tool>
            <Drop /><Sep $w={13} />
            <Tool $w={20} aria-label="Границы"><BorderIcon /></Tool><Drop /><Sep $w={14} />
            <Tool $w={19} aria-label="Цвет заливки"><FillIcon /></Tool><Drop />
            <Tool $w={23} aria-label="Цвет текста"><FontColorIcon /></Tool><Drop w={8} />
          </Row>
        </TwoRows>
      </Group>
      <Group title="Выравнивание" w={363} pad={6} launcher>
        <TwoRows>
          <Row>
            <Tool $w={23} aria-label="По верхнему краю"><Lines rows={vRows} off={0} /></Tool>
            <Tool $w={23} aria-label="По середине"><Lines rows={vRows} off={4} /></Tool>
            <Tool $w={22} $on aria-label="По нижнему краю"><Lines rows={vRows} off={8} /></Tool>
            <Sep $w={10} />
            <Tool $w={22} aria-label="Ориентация"><OrientIcon /></Tool><Drop w={8} />
          </Row>
          <Row>
            <Tool $w={23} aria-label="По левому краю"><Lines rows={lRows} off={2} /></Tool>
            <Tool $w={23} aria-label="По центру"><Lines rows={cRows} off={2} /></Tool>
            <Tool $w={22} $on aria-label="По правому краю"><Lines rows={rRows} off={2} /></Tool>
            <Sep $w={10} />
            <Tool $w={22} aria-label="Уменьшить отступ"><IndentIcon /></Tool>
            <Tool $w={22} aria-label="Увеличить отступ"><IndentIcon right /></Tool>
          </Row>
        </TwoRows>
        <TallSep />
        <TwoRows>
          <LabelTool><WrapIcon />Перенос текста</LabelTool>
          <LabelTool><MergeIcon />Объединить и поместить в центре<Arrow /></LabelTool>
        </TwoRows>
      </Group>
      <Group title="Число" w={143} pad={5} launcher>
        <TwoRows>
          <Choice w={134} label="Числовой формат" value="Общий" />
          <Row>
            <Tool $w={23} aria-label="Денежный формат"><MoneyIcon /></Tool><Drop />
            <Tool $w={24} $size={13}>%</Tool><Tool $w={24}>000</Tool><Sep $w={8} />
            <Tool $w={23} aria-label="Увеличить разрядность"><DecimalIcon /></Tool>
            <Tool $w={22} aria-label="Уменьшить разрядность"><DecimalIcon less /></Tool>
          </Row>
        </TwoRows>
      </Group>
      <Group title="Стили" w={250} pad={4}>
        <Big w={109} icon={<CondIcon />} a="Условное" b="форматирование" />
        <Big w={87} icon={<TableIcon />} a="Форматировать" b="как таблицу" />
        <Big w={48} icon={<CellStyleIcon />} a="Стили" b="ячеек" />
      </Group>
      <Group title="Ячейки" w={92} pad={8}>
        <SmallStack>
          <LabelTool><InsertCellsIcon />Вставить<Arrow /></LabelTool>
          <LabelTool><DeleteCellsIcon />Удалить<Arrow /></LabelTool>
          <LabelTool><FormatCellsIcon />Формат<Arrow /></LabelTool>
        </SmallStack>
      </Group>
      <Group title="Редактирование" w={174} pad={6}>
        <SmallStack>
          <Row><Tool $w={20} aria-label="Сумма"><SigmaIcon /></Tool><Drop /></Row>
          <Row><Tool $w={20} aria-label="Заполнить"><FillDownIcon /></Tool><Drop /></Row>
          <Row><Tool $w={20} aria-label="Очистить"><EraserIcon /></Tool><Drop /></Row>
        </SmallStack>
        <Big w={70} icon={<SortIcon />} a="Сортировка" b="и фильтр" />
        <Big w={64} icon={<FindIcon />} a="Найти и" b="выделить" />
      </Group>
    </Ribbon>
  );
}

function Sheet() {
  const grey = "#d9d9d9";
  const pink = "1px solid #ff99cc";
  const blanks = (n: number, bottom?: string) => Array.from({ length: n }, (_, i) => <Cell key={i} $bottom={bottom} />);
  return (
    <Grid>
      <colgroup>
        <col width={34} /><col width={3} />
        {columns.map(([c, w]) => <col key={c} width={w} />)}
      </colgroup>
      <thead>
        <tr>
          <Corner aria-label="Выделить всё"><svg width="15" height="15" viewBox="0 0 15 15"><path d="M15 0v15H0z" fill="#b6bbc2" /></svg></Corner>
          <ColHead />
          {columns.map(([c]) => <ColHead key={c}>{c}</ColHead>)}
        </tr>
      </thead>
      <tbody>
        {textRows.map((r) => (
          <tr key={r.n}>
            <RowHead $h={24}>{r.n}</RowHead>
            <Edge $kind={r.pink ? "green" : "bar"} />
            <Cell colSpan={r.span} $pink={r.pink} $bottom={r.pink || r.n === 6 ? pink : undefined}>{r.text}</Cell>
            {blanks(9 - r.span, r.n === 6 ? pink : undefined)}
          </tr>
        ))}
        <tr>
          <RowHead $h={25}>11</RowHead><Edge $kind="bar" />
          {blanks(4)}
          <Cell colSpan={5} $size={19}>Срок действия патента на изобретение - 20 лет + продление</Cell>
        </tr>
        <tr>
          <RowHead $h={26}>12</RowHead><Edge $kind="bar" />
          <Cell $bottom="2px solid #000" />
          {years.map((y, i) => (
            <Cell key={i} $align="center" $bold $lh={i < 3 ? 21 : 23} $bottom={i < 3 ? "2px solid #000" : undefined}>{y}</Cell>
          ))}
        </tr>
        <tr>
          <RowHead $h={25}>13</RowHead><Edge $kind="line" />
          <Cell $align="center" $bold $right="#000" $bottom="1px solid #000">Год прогонозного периода</Cell>
          {years.map((_, i) => (
            <Cell key={i} $align="center" $bold $right={i < 2 ? "#000" : grey} $bottom="1px solid #000">{i < 7 ? i + 1 : ""}</Cell>
          ))}
        </tr>
        {dataRows.map((r) => (
          <tr key={r.n}>
            <RowHead $h={r.h}>{r.n}</RowHead><Edge $kind="line" />
            <Cell $size={19} $lh={r.soft ? 25 : 21} $right="#000" $bottom="1px solid #000">{r.label}</Cell>
            {r.v.map((v, i) => (
              <Cell key={i} $align="right" $right={r.soft && i > 1 ? grey : "#000"} $bottom="1px solid #000">{v}</Cell>
            ))}
          </tr>
        ))}
      </tbody>
    </Grid>
  );
}

export default function App() {
  return (
    <Shell>
      <GlobalStyle />
      <TabBar>
        <FileTab>Файл</FileTab>
        <RibbonTab $w={68} $active>Главная</RibbonTab>
        {ribbonTabs.map(([t, w]) => <RibbonTab key={t} $w={w}>{t}</RibbonTab>)}
        <WindowTools>
          <button aria-label="Свернуть ленту"><CollapseIcon /></button>
          <button aria-label="Справка"><HelpIcon /></button>
          <button aria-label="Свернуть"><MinIcon /></button>
          <button aria-label="Восстановить"><RestoreIcon /></button>
          <button aria-label="Закрыть"><CloseIcon /></button>
        </WindowTools>
      </TabBar>
      <RedStrip />
      <RibbonPanel />
      <FormulaBar>
        <FormulaInner>
          <NameBox aria-label="Имя" defaultValue="A3" />
          <NameArrow aria-label="Список имён"><Arrow c="#222" w={8} /></NameArrow>
          <FxZone><Knob /><Fx>f<small>x</small></Fx></FxZone>
          <FormulaInput aria-label="Строка формул" defaultValue="-" />
          <ExpandButton aria-label="Развернуть">
            <svg width="8" height="6" viewBox="0 0 8 6"><path d="M1 1l3 3 3-3" fill="none" stroke="#444" strokeWidth="2" /></svg>
          </ExpandButton>
        </FormulaInner>
      </FormulaBar>
      <SheetArea>
        <Viewport><Sheet /></Viewport>
        <VScroll>
          <SplitBox />
          <ScrollArrow aria-label="Вверх"><svg width="9" height="5" viewBox="0 0 9 5"><path d="M0 5h9L4.500 0z" fill="#4a4f57" /></svg></ScrollArrow>
          <VThumb><svg width="8" height="7" viewBox="0 0 8 7" shapeRendering="crispEdges"><path d="M0 .5h8M0 2.500h8M0 4.500h8M0 6.500h8" stroke="#7d838c" /></svg></VThumb>
          <ScrollArrow aria-label="Вниз"><svg width="9" height="5" viewBox="0 0 9 5"><path d="M0 0h9L4.500 5z" fill="#4a4f57" /></svg></ScrollArrow>
        </VScroll>
        <RightStrip />
      </SheetArea>
      <SheetBar>
        <SheetNav>
          <button aria-label="Первый лист"><NavIcon dir="l" end /></button>
          <button aria-label="Предыдущий лист"><NavIcon dir="l" /></button>
          <button aria-label="Следующий лист"><NavIcon dir="r" /></button>
          <button aria-label="Последний лист"><NavIcon dir="r" end /></button>
        </SheetNav>
        <SheetTabs>
          {sheets.map((s) => <SheetTab key={s.t} $w={s.w} $c={s.c} $flat={s.flat} $dark={s.dark}>{s.t}</SheetTab>)}
        </SheetTabs>
        <HScroll>
          <Tool $w={22} aria-label="Вставить лист"><NewSheetIcon /></Tool>
          <SplitHandle />
          <Tool $w={16} aria-label="Влево"><NavIcon dir="l" /></Tool>
          <HThumb><svg width="8" height="8" viewBox="0 0 8 8" shapeRendering="crispEdges"><path d="M.5 0v8M2.500 0v8M4.500 0v8M6.500 0v8" stroke="#7d838c" /></svg></HThumb>
          <Tool $w={18} aria-label="Вправо"><NavIcon dir="r" /></Tool>
          <SplitHandle />
        </HScroll>
      </SheetBar>
      <Handle />
      <Watermark>
        <MarkName>Евгений Кержаев</MarkName>
        <MarkSite href="#">kerzhaev.ru</MarkSite>
      </Watermark>
    </Shell>
  );
}
